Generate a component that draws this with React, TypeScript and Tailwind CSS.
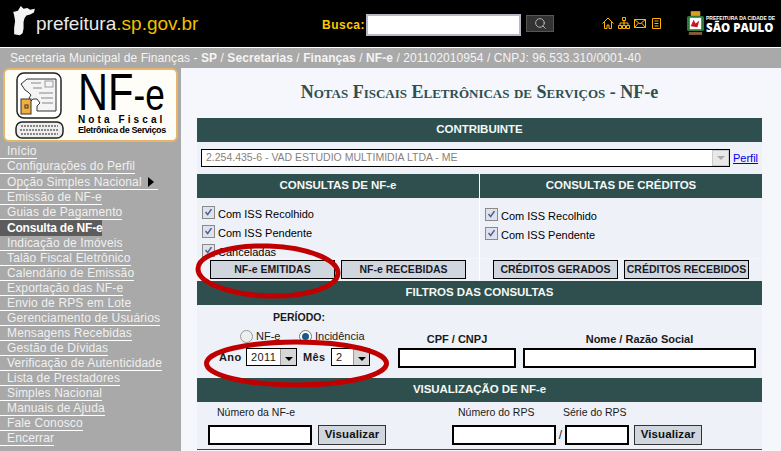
import { Search } from 'lucide-react'

const menu = [
  'Início',
  'Configurações do Perfil',
  'Opção Simples Nacional',
  'Emissão de NF-e',
  'Guias de Pagamento',
  'Consulta de NF-e',
  'Indicação de Imóveis',
  'Talão Fiscal Eletrônico',
  'Calendário de Emissão',
  'Exportação das NF-e',
  'Envio de RPS em Lote',
  'Gerenciamento de Usuários',
  'Mensagens Recebidas',
  'Gestão de Dívidas',
  'Verificação de Autenticidade',
  'Lista de Prestadores',
  'Simples Nacional',
  'Manuais de Ajuda',
  'Fale Conosco',
  'Encerrar',
]

function SectionHead({ children }: { children: React.ReactNode }) {
  return (
    <div className="h-6 bg-[#2f4f4f] text-[#f4f8f4] text-[11.5px] font-bold tracking-[-0.05px] flex items-center justify-center whitespace-nowrap">
      {children}
    </div>
  )
}

function Check({ label }: { label: string }) {
  return (
    <div className="flex items-center gap-[3px] h-[19px] text-[11px] text-black">
      <span className="w-[13px] h-[13px] border border-[#8a8a8a] bg-[#dfe2ea] flex items-center justify-center">
        <svg viewBox="0 0 13 13" className="w-[11px] h-[11px]">
          <path d="M3 6l2.500 3L10 2.500" fill="none" stroke="#4a5a9a" strokeWidth="1.800" />
        </svg>
      </span>
      <span className="pt-[3px]">{label}</span>
    </div>
  )
}

function ActionButton({ label }: { label: string }) {
  return (
    <div className="w-[125px] h-[19px] border border-black bg-[#d0d6de] text-[10.5px] font-bold text-[#1a1a2a] flex items-center justify-center whitespace-nowrap">
      {label}
    </div>
  )
}

function ComboArrow() {
  return (
    <span className="w-[16px] h-full bg-[#d6d6d6] border-l border-[#999] flex items-center justify-center pt-[4px]">
      <span className="w-0 h-0 border-x-[4px] border-x-transparent border-t-[4px] border-t-black" />
    </span>
  )
}

function Field({ width }: { width: string }) {
  return <div className={`${width} h-[20px] bg-white border-2 border-black`} />
}

function VisualizarButton() {
  return (
    <div className="w-[68px] h-[20px] bg-[#d0d6de] border border-[#333] text-[11.5px] font-bold tracking-[0.1px] text-[#111] flex items-center justify-center">
      Visualizar
    </div>
  )
}

function Logo() {
  return (
    <div className="h-[74px] mx-[3px] rounded-[6px] border-2 border-[#e5b56b] bg-[#fffdf8] flex gap-[13px] pl-[10px] overflow-hidden">
      <svg viewBox="0 0 50 68" className="w-[50px] h-[68px] mt-[2px] shrink-0">
        <rect x="2" y="1" width="44" height="45" rx="7" fill="#fff" stroke="#222" strokeWidth="1.500" />
        <path d="M6 12l6-5h29v32H22v-5l3-3-3-4h-4l-2 2-2-3 2-3-3-3-3-2z" fill="#f4f4f4" stroke="#333" />
        <path d="M16 11h10M18 16h9M24 21h14M26 26h12M27 31h11" stroke="#aaa" strokeWidth="1.500" />
        <rect x="30" y="9" width="8" height="6" fill="none" stroke="#999" />
        <rect x="6" y="27" width="10" height="15" fill="#f0b040" stroke="#333" />
        <rect x="10" y="33" width="3" height="3" fill="none" stroke="#333" />
        <rect x="1" y="50" width="47" height="16" rx="6" fill="#eee" stroke="#222" strokeWidth="1.500" />
        <path d="M6 54h37M5 58h39M6 62h37" stroke="#888" strokeWidth="2" strokeDasharray="2 1" />
      </svg>
      <div className="flex flex-col text-black">
        <div className="h-[44px] leading-[44px] w-fit origin-left scale-x-[0.8] whitespace-nowrap">
          <span className="text-[52px]">NF</span>
          <span className="text-[44px]">-e</span>
        </div>
        <div className="text-[10px] leading-[11px] font-bold tracking-[3.100px] whitespace-nowrap">Nota Fiscal</div>
        <div className="text-[9px] leading-[11px] font-bold tracking-[-0.4px] whitespace-nowrap">Eletrônica de Serviços</div>
      </div>
    </div>
  )
}

export default function App() {
  return (
    <div className="relative w-[781px] h-[451px] overflow-hidden bg-[#f5f7fd] font-['Liberation_Sans',sans-serif]">
      {/* Top bar */}
      <header className="h-[47px] bg-black flex items-center">
        <div className="w-[322px] flex items-center pl-[13px]">
          <svg viewBox="0 0 24 34" className="w-[23px] h-[32px] mb-[3px]">
            <path d="M1 6l4-1 3-5 3 3 4-1 3 2 5-1-1 4-4 2-4 1-2 3-1 4 0 7-1 5-3 2-6-1 0-7 1-7-1-6-1-4z" fill="#f4f4f4" />
          </svg>
          <div className="mt-[3px] whitespace-nowrap">
            <span className="text-[19px] leading-none text-[#e8e8e8]">prefeitura</span>
            <span className="text-[19px] leading-none text-[#f0c000]">.sp.gov.br</span>
          </div>
        </div>
        <span className="w-[44px] text-[12px] font-bold text-[#ffc800] tracking-[0.5px] mt-[2px]">Busca:</span>
        <div className="w-[155px] h-[22px] mt-[2px] bg-white border-2 border-[#b8b8c8]" />
        <div className="w-[28px] h-[17px] ml-[5px] mb-[1px] bg-[#333] border border-[#555] flex items-center justify-center">
          <Search className="w-[13px] h-[13px] text-[#ccc]" strokeWidth={1.5} />
        </div>
        <div className="flex items-center gap-[4px] ml-[48px] mb-[1px]">
          <svg viewBox="0 0 12 12" className="w-[12px] h-[12px]" fill="none" stroke="#ffb400">
            <path d="M0.500 6.500L6 1l5.500 5.500M2.500 5v6.500h2.500V8h2v3.500h2.500V5" />
          </svg>
          <svg viewBox="0 0 12 12" className="w-[12px] h-[12px]" fill="none" stroke="#ffb400">
            <path d="M4.500 0.500h3v3h-3zM0.500 8.500h3v3h-3zM4.500 8.500h3v3h-3zM8.500 8.500h3v3h-3zM6 3.500v5M2 8.500V6h8v2.500" />
          </svg>
          <svg viewBox="0 0 12 12" className="w-[12px] h-[12px]" fill="none" stroke="#ffb400">
            <path d="M0.500 2.500h11v8h-11zM0.500 2.500L6 7l5.500-4.500M0.500 10.500l4-4.500M11.500 10.500l-4-4.500" />
          </svg>
          <svg viewBox="0 0 12 12" className="w-[12px] h-[12px]" fill="none" stroke="#ffb400">
            <path d="M2.500 1.500h8v10h-8zM4.500 4h4M4.500 6.500h4M4.500 9h4" />
          </svg>
        </div>
        <div className="flex items-center ml-[24px]">
          <svg viewBox="0 0 20 26" className="w-[19px] h-[25px]">
            <rect x="5" y="0" width="10" height="5" fill="#d8a020" />
            <rect x="1" y="5" width="18" height="16" rx="2" fill="#2c7a3a" />
            <rect x="4" y="7" width="12" height="12" fill="#fff" />
            <path d="M5 16l3-7 2 4 4-3-2 7z" fill="#c8141c" />
            <rect x="3" y="22" width="14" height="3" fill="#8a5a3a" />
          </svg>
          <div className="w-[68px] ml-px flex flex-col text-white font-bold">
            <span className="text-[5px] leading-[7px] whitespace-nowrap">PREFEITURA DA CIDADE DE</span>
            <span className="text-[11.5px] leading-[11px] whitespace-nowrap font-['Open_Sans',sans-serif] font-extrabold">SÃO PAULO</span>
          </div>
        </div>
      </header>
      <div className="h-px bg-white" />

      {/* Breadcrumb */}
      <div className="h-5 bg-[#a9a9a9] text-[#f4f4f4] text-[12px] tracking-[0.08px] pl-[10px] flex items-center whitespace-nowrap">
        Secretaria Municipal de Finanças -&nbsp;<b>SP</b>&nbsp;/&nbsp;<b>Secretarias</b>&nbsp;/&nbsp;<b>Finanças</b>&nbsp;/&nbsp;<b>NF-e</b>&nbsp;/ 201102010954 / CNPJ: 96.533.310/0001-40
      </div>

      <div className="flex h-[383px]">
        {/* Sidebar */}
        <aside className="w-[181px] shrink-0 bg-[#a9a9a9]">
          <Logo />
          <ul className="mt-[2px] flex flex-col items-start text-[12px] tracking-[0.15px] text-[#f0f0f0] whitespace-nowrap">
            {menu.map((item) => {
              const active = item === 'Consulta de NF-e'
              const hasArrow = item === 'Opção Simples Nacional'
              return (
                <li
                  key={item}
                  className={`pl-[7px] leading-[14px] flex items-center ${hasArrow ? 'h-[16px] border-b border-white pr-[4px]' : ''} ${active ? 'bg-[#5c5c5c] h-[16px] font-bold text-white tracking-[-0.2px]' : ''} ${!active && !hasArrow ? 'h-[15px] border-b border-white' : ''}`}
                >
                  {item}
                  {hasArrow && (
                    <span className="ml-[6px] w-0 h-0 border-y-[5px] border-y-transparent border-l-[6px] border-l-black" />
                  )}
                </li>
              )
            })}
          </ul>
        </aside>

        {/* Main content */}
        <main className="flex-1 pl-[16px] pr-[19px]">
          <h1 className="h-[50px] pt-[12px] text-center text-[#2f4f4f] font-['Liberation_Serif',serif] font-bold text-[18px] leading-[24px] [font-variant:small-caps] whitespace-nowrap">
            Notas Fiscais Eletrônicas de Serviços - <span className="[font-variant:normal]">NF-e</span>
          </h1>
          <SectionHead>CONTRIBUINTE</SectionHead>

          <div className="h-[32px] bg-[#eef1f7] flex items-center pl-[4px] gap-[3px]">
            <div className="w-[529px] h-[18px] bg-white border border-black flex items-center justify-between text-[#8a7f78] text-[10.5px] pl-[4px]">
              2.254.435-6 - VAD ESTUDIO MULTIMIDIA LTDA - ME
              <span className="w-[17px] h-[16px] bg-[#e8e8e8] border border-[#ccc] flex items-center justify-center">
                <span className="w-0 h-0 border-x-[4px] border-x-transparent border-t-[4px] border-t-[#aaa]" />
              </span>
            </div>
            <span className="text-[11px] text-[#0000ee] underline">Perfil</span>
          </div>

          <div className="grid grid-cols-[283px_1fr]">
            <div className="border-r border-white">
              <SectionHead>CONSULTAS DE NF-e</SectionHead>
              <div className="h-[60px] bg-[#eef1f7] pl-[5px] pt-[5px]">
                <Check label="Com ISS Recolhido" />
                <Check label="Com ISS Pendente" />
                <Check label="Canceladas" />
              </div>
              <div className="h-[22px] mt-px bg-[#eef1f7] flex gap-[6px] pl-[13px] pt-px">
                <ActionButton label="NF-e EMITIDAS" />
                <ActionButton label="NF-e RECEBIDAS" />
              </div>
            </div>
            <div>
              <SectionHead>CONSULTAS DE CRÉDITOS</SectionHead>
              <div className="h-[60px] bg-[#eef1f7] pl-[5px] pt-[7px]">
                <Check label="Com ISS Recolhido" />
                <Check label="Com ISS Pendente" />
              </div>
              <div className="h-[22px] mt-px bg-[#eef1f7] flex gap-[6px] pl-[13px] pt-px">
                <ActionButton label="CRÉDITOS GERADOS" />
                <ActionButton label="CRÉDITOS RECEBIDOS" />
              </div>
            </div>
          </div>

          <SectionHead>FILTROS DAS CONSULTAS</SectionHead>
          <div className="h-[73px] bg-[#eef1f7] flex text-[11px] text-[#1a1a1a]">
            <div className="w-[201px] flex flex-col shrink-0">
              <div className="font-bold text-[10.5px] mt-[4px] h-[18px] flex items-center pl-[76px]">PERÍODO:</div>
              <div className="flex items-center h-[18px] text-[#222] pl-[43px]">
                <span className="w-[13px] h-[13px] rounded-full border border-[#999] bg-[#eee]" />
                <span className="ml-[3px] w-[43px]">NF-e</span>
                <span className="w-[13px] h-[13px] rounded-full border border-[#777] bg-white flex items-center justify-center">
                  <span className="w-[7px] h-[7px] rounded-full bg-[#1a5a8a]" />
                </span>
                <span className="ml-[3px]">Incidência</span>
              </div>
              <div className="flex items-center h-[20px] mt-[2px] font-bold tracking-[0.4px] pl-[22px]">
                <span className="w-[27px]">Ano</span>
                <div className="w-[51px] h-[18px] bg-white border border-black flex items-center justify-between pl-[4px] font-normal">
                  2011
                  <ComboArrow />
                </div>
                <span className="ml-[6px] w-[28px]">Mês</span>
                <div className="w-[39px] h-[18px] bg-white border border-black flex items-center justify-between pl-[4px] font-normal">
                  2
                  <ComboArrow />
                </div>
              </div>
            </div>
            <div className="w-[125px] shrink-0 pt-[25px] font-bold">
              <div className="w-[118px] h-[18px] flex items-center justify-center whitespace-nowrap">CPF / CNPJ</div>
              <Field width="w-[118px]" />
            </div>
            <div className="flex-1 pt-[25px] font-bold">
              <div className="w-[233px] h-[18px] flex items-center justify-center whitespace-nowrap">Nome / Razão Social</div>
              <Field width="w-[233px]" />
            </div>
          </div>

          <SectionHead>VISUALIZAÇÃO DE NF-e</SectionHead>
          <div className="h-[48px] bg-[#eef1f7] border-b border-[#2f4f4f] flex text-[10.5px] text-[#1a1a1a]">
            <div className="w-[255px] shrink-0 pl-[11px]">
              <div className="h-[22px] pl-[9px] flex items-center">Número da NF-e</div>
              <div className="flex gap-[6px] pt-[1px]">
                <Field width="w-[104px]" />
                <VisualizarButton />
              </div>
            </div>
            <div>
              <div className="h-[22px] flex items-center">
                <span className="w-[111px] pl-[6px]">Número do RPS</span>
                <span>Série do RPS</span>
              </div>
              <div className="flex items-center pt-[1px]">
                <Field width="w-[104px]" />
                <span className="w-[9px] text-center text-[12px]">/</span>
                <Field width="w-[64px]" />
                <span className="w-[5px]" />
                <VisualizarButton />
              </div>
            </div>
          </div>
        </main>
      </div>

      {/* Hand-drawn annotation circles */}
      <svg className="absolute inset-0 pointer-events-none" width="781" height="451">
        <ellipse cx="268" cy="271" rx="70" ry="25" fill="none" stroke="#c00000" strokeWidth="5" transform="rotate(2 268 271)" />
        <ellipse cx="296.500" cy="363.500" rx="90" ry="21.500" fill="none" stroke="#c00000" strokeWidth="5" />
      </svg>
    </div>
  )
}
